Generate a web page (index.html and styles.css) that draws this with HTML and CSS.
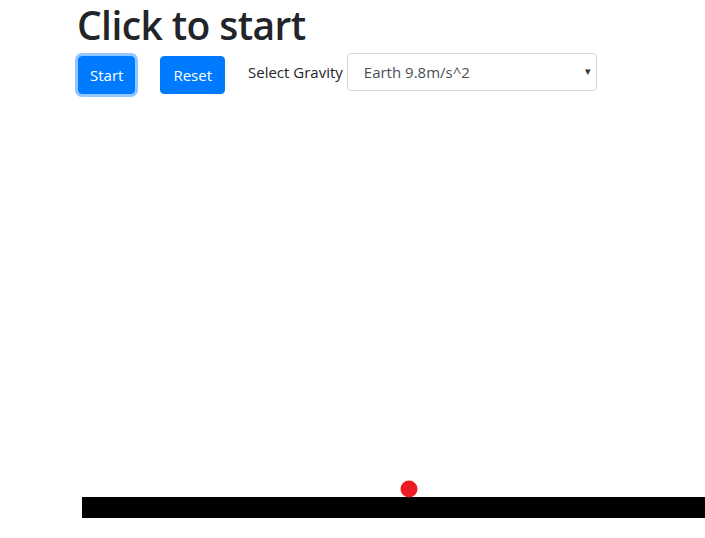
FILE: index.html
```html
<!DOCTYPE html>
<html>
<head>
<meta charset="utf-8">
<link rel="stylesheet" href="styles.css">
</head>
<body>
<div class="page">
  <h1 class="title">Click to start</h1>
  <div class="toolbar">
    <button class="btn btn-focus">Start</button>
    <button class="btn btn-reset">Reset</button>
    <label class="label">Select Gravity</label>
    <div class="select-wrap">
      <select class="select">
        <option>Earth 9.8m/s^2</option>
      </select>
      <span class="arrow">&#9662;</span>
    </div>
  </div>
  <div class="stage">
    <svg width="623" height="424" viewBox="0 0 623 424">
      <rect x="0" y="403" width="623" height="21" fill="#000"/>
      <circle cx="327" cy="395" r="8.5" fill="#ed1c24"/>
    </svg>
  </div>
</div>
</body>
</html>
```
FILE: styles.css
```css
html, body {
  margin: 0;
  padding: 0;
  background: #fff;
}
.page {
  padding-left: 78px;
  font-family: "Open Sans", "Noto Sans", sans-serif;
  color: #212529;
}
.title {
  margin: 0 0 5px -1px;
  padding-top: 1px;
  font-size: 39px;
  font-weight: 600;
  line-height: 47px;
  letter-spacing: -0.6px;
}
.toolbar {
  display: flex;
  align-items: flex-start;
  height: 41px;
}
.btn {
  margin-top: 3px;
  height: 38px;
  padding: 0 11px;
  border: 1px solid #007bff;
  border-radius: 4px;
  background: #007bff;
  color: #fff;
  font-family: inherit;
  font-size: 15px;
  line-height: 36px;
  margin-right: 25px;
}
.btn-reset {
  padding: 0 12px;
  margin-right: 23px;
}
.btn-focus {
  box-shadow: 0 0 0 3px rgba(38, 143, 255, 0.5);
}
.label {
  font-size: 15px;
  line-height: 38px;
  margin-right: 4px;
}
.select-wrap {
  position: relative;
  width: 250px;
  height: 38px;
}
.select {
  appearance: none;
  -webkit-appearance: none;
  width: 250px;
  height: 38px;
  border: 1px solid #ced4da;
  border-radius: 4px;
  background: #fff;
  color: #495057;
  font-family: inherit;
  font-size: 15px;
  padding: 0 0 0 16px;
  margin: 0;
}
.arrow {
  position: absolute;
  right: 6px;
  top: 10px;
  font-size: 11px;
  color: #333;
  line-height: 16px;
}
.stage {
  margin-left: 4px;
  height: 424px;
}
.stage svg {
  display: block;
}
```
